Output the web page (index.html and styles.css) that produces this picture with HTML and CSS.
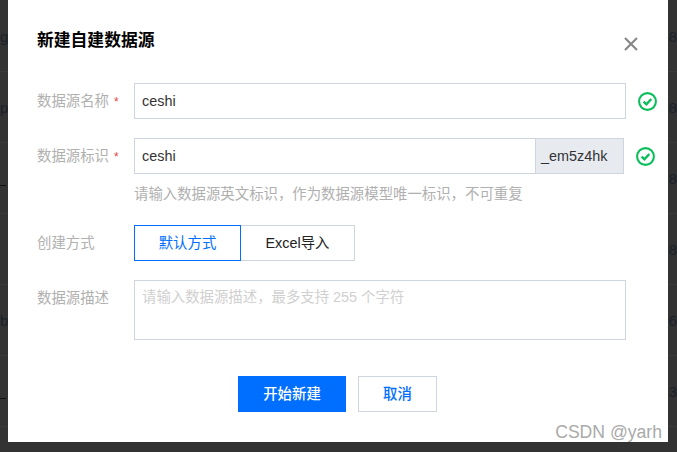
FILE: index.html
```html
<!DOCTYPE html>
<html lang="zh">
<head>
<meta charset="utf-8">
<title>新建自建数据源</title>
<link rel="stylesheet" href="styles.css">
</head>
<body>
<div class="table">
  <div class="row"><span>g</span><span>08</span></div>
  <div class="row"><span>p</span><span>08</span></div>
  <div class="row"><span class="dash"></span><span>08</span></div>
  <div class="row"><span></span><span>08</span></div>
  <div class="row"><span>b</span><span>06</span></div>
  <div class="row"><span class="dash"></span><span>03</span></div>
</div>
<div class="modal">
  <div class="head">
    <h1 class="title">新建自建数据源</h1>
    <svg class="close" width="14" height="14" viewBox="0 0 14 14"><path d="M1 1L13 13M13 1L1 13" stroke="#888" stroke-width="2.2" fill="none"/></svg>
  </div>
  <div class="form">
    <div class="field">
      <label class="label">数据源名称<i class="req">*</i></label>
      <div class="input wide">ceshi</div>
      <svg class="ok" width="19" height="19" viewBox="0 0 19 19"><circle cx="9.5" cy="9.5" r="8.4" fill="none" stroke="#0abf5b" stroke-width="2.1"/><path d="M5.6 9.6L8.4 12.3L13.3 7" fill="none" stroke="#0abf5b" stroke-width="2.4"/></svg>
    </div>
    <div class="field field-tight">
      <label class="label">数据源标识<i class="req">*</i></label>
      <div class="group">
        <div class="input grow">ceshi</div>
        <div class="addon">_em5z4hk</div>
      </div>
      <svg class="ok" width="19" height="19" viewBox="0 0 19 19"><circle cx="9.5" cy="9.5" r="8.4" fill="none" stroke="#0abf5b" stroke-width="2.1"/><path d="M5.6 9.6L8.4 12.3L13.3 7" fill="none" stroke="#0abf5b" stroke-width="2.4"/></svg>
    </div>
    <p class="hint">请输入数据源英文标识，作为数据源模型唯一标识，不可重复</p>
    <div class="field">
      <label class="label">创建方式</label>
      <div class="segments">
        <div class="seg seg-on">默认方式</div>
        <div class="seg seg-off">Excel导入</div>
      </div>
    </div>
    <div class="field field-top">
      <label class="label label-top">数据源描述</label>
      <div class="textarea">请输入数据源描述，最多支持 255 个字符</div>
    </div>
  </div>
  <div class="actions">
    <div class="btn btn-primary">开始新建</div>
    <div class="btn btn-ghost">取消</div>
  </div>
  <div class="mark">CSDN @yarh</div>
</div>
</body>
</html>
```
FILE: styles.css
```css
* { box-sizing: border-box; }
html, body { margin: 0; height: 100%; overflow: hidden; }
body {
  width: 677px;
  height: 452px;
  background: #333;
  font-family: "Liberation Sans", "Noto Sans CJK SC", sans-serif;
  font-size: 14.4px;
  color: #222;
  position: relative;
}
.table { padding-top: 1px; }
.row {
  height: 71px;
  border-bottom: 1px solid #3a3a3a;
  display: flex;
  justify-content: space-between;
  align-items: center;
  color: #1c2129;
  font-size: 15px;
}
.dash { width: 6px; height: 1px; background: #111; margin-top: 14px; }
.modal {
  position: absolute;
  left: 8px;
  top: 0;
  width: 660px;
  height: 442px;
  background: #fff;
  padding-left: 29px;
}
.head {
  height: 83px;
  padding-right: 30px;
  display: flex;
  justify-content: space-between;
  align-items: flex-start;
}
.title {
  margin: 30px 0 0;
  font-size: 16.8px;
  line-height: 22px;
  font-weight: 700;
  color: #000;
}
.close { margin-top: 37px; flex: none; }
.form { display: flex; flex-direction: column; }
.field { display: flex; align-items: center; height: 36px; margin-bottom: 19px; }
.field-tight { margin-bottom: 8px; }
.field-top { align-items: flex-start; height: 60px; margin-bottom: 36px; }
.label { width: 97px; flex: none; color: #b0b0b0; margin-top: -4px; }
.label-top { line-height: 36px; margin-top: 0; }
.req { font-style: normal; color: #e54545; margin-left: 5px; font-size: 12px; }
.input {
  height: 36px;
  border: 1px solid #cfd5de;
  padding-left: 7px;
  line-height: 34px;
  color: #333;
}
.wide { width: 492px; flex: none; }
.group { display: flex; width: 490px; flex: none; }
.grow { flex: 1; border-right: 0; }
.addon {
  width: 89px;
  height: 36px;
  background: #e7eaef;
  border: 1px solid #cfd5de;
  padding-left: 5px;
  line-height: 34px;
  color: #333;
}
.ok { margin-left: 12px; flex: none; }
.hint {
  margin: 0 0 19px 97px;
  height: 24px;
  line-height: 24px;
  color: #b0b0b0;
}
.segments { display: flex; }
.seg { height: 36px; line-height: 34px; text-align: center; }
.seg-on { width: 107px; border: 1px solid #006eff; color: #006eff; }
.seg-off { width: 114px; border: 1px solid #cfd5de; border-left: 0; color: #222; }
.textarea {
  width: 492px;
  height: 60px;
  flex: none;
  border: 1px solid #cfd5de;
  padding: 7px 7px;
  line-height: 18px;
  color: #d0d0d0;
}
.actions { display: flex; gap: 12px; margin-left: 201px; }
.btn { height: 36px; line-height: 34px; text-align: center; }
.btn-primary { width: 108px; background: #006eff; color: #fff; font-weight: 500; line-height: 36px; }
.btn-ghost { width: 79px; border: 1px solid #cfd5de; color: #006eff; font-weight: 500; }
.mark {
  position: absolute;
  right: 6px;
  bottom: 0;
  font-size: 17.6px;
  line-height: 20px;
  color: #aaa;
}
```
